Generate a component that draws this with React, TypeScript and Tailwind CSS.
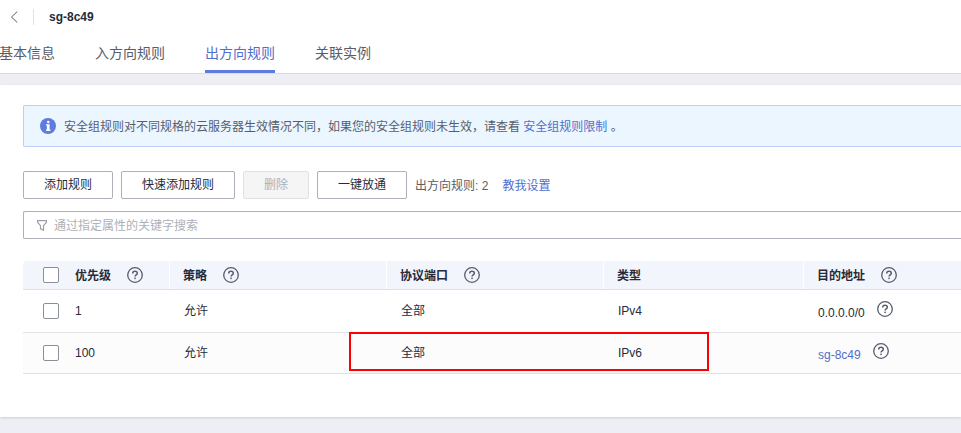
import React, { useState } from 'react';

interface Rule {
  priority: number;
  policy: string;
  port: string;
  type: string;
  target: string;
  targetIsLink?: boolean;
}

const TABS = ['基本信息', '入方向规则', '出方向规则', '关联实例'];

const RULES: Rule[] = [
  { priority: 1, policy: '允许', port: '全部', type: 'IPv4', target: '0.0.0.0/0' },
  { priority: 100, policy: '允许', port: '全部', type: 'IPv6', target: 'sg-8c49', targetIsLink: true },
];

function HelpIcon() {
  return (
    <svg width="16" height="16" viewBox="0 0 16 16" fill="none" className="shrink-0 text-[#575d6c]">
      <circle cx="8" cy="8" r="7.3" stroke="currentColor" strokeWidth="1.3" />
      <path
        d="M5.7 6.4C5.7 5 6.6 4.2 8 4.2s2.3.8 2.3 2c0 1.6-2.2 1.6-2.2 3.3"
        stroke="currentColor"
        strokeWidth="1.5"
      />
      <rect x="7.3" y="10.6" width="1.5" height="1.5" fill="currentColor" />
    </svg>
  );
}

function InfoIcon() {
  return (
    <svg width="16" height="16" viewBox="0 0 16 16" className="shrink-0">
      <circle cx="8" cy="8" r="8" fill="#5e7ce0" />
      <circle cx="8.3" cy="4" r="1.3" fill="#fff" />
      <path d="M6 6.2h3.6v5.3h.8V13H6v-1.5h.9V7.6H6z" fill="#fff" />
    </svg>
  );
}

function FilterIcon() {
  return (
    <svg width="10" height="11" viewBox="0 0 10 11" fill="none" className="shrink-0">
      <path d="M.6.6h8.8v1.6L6.5 5.6v4.6l-3-1.4V5.6L.6 2.2z" stroke="#9b9fa8" strokeWidth="1.2" />
    </svg>
  );
}

function Checkbox({ label }: { label: string }) {
  return (
    <input
      type="checkbox"
      aria-label={label}
      className="size-4 shrink-0 appearance-none rounded-xs border border-[#8a8e99] bg-white checked:bg-[#5e7ce0]"
    />
  );
}

function HeadCell({ title, help, className }: { title: string; help?: boolean; className?: string }) {
  return (
    <th className={`group h-[29px] border-b border-[#dfe1e6] bg-[#f2f5fc] p-0 ${className ?? ''}`}>
      <div className="flex h-7 items-center gap-4 border-r border-white px-[13px] group-last:border-r-0">
        <span className="pt-px">{title}</span>
        {help && <HelpIcon />}
      </div>
    </th>
  );
}

export default function App() {
  const [activeTab, setActiveTab] = useState('出方向规则');
  const buttonClass = 'h-7 rounded-xs border border-[#adb0b8] bg-white px-5 text-[#252b3a]';

  return (
    <div className="min-h-screen overflow-x-hidden bg-[#eeeff4] font-['Liberation_Sans','Noto_Sans_CJK_SC',sans-serif] text-xs text-[#252b3a]">
      <header className="border-b border-[#d9dbe3] bg-white">
        <div className="flex h-[34px] items-center gap-[15px] pl-2.5">
          <button aria-label="返回" className="text-[#575d6c]">
            <svg width="8" height="12" viewBox="0 0 8 12" fill="none">
              <path d="M7.3.5 1.5 6l5.8 5.5" stroke="currentColor" />
            </svg>
          </button>
          <span className="h-4 w-px bg-[#dfe1e6]" />
          <h1 className="font-bold">sg-8c49</h1>
        </div>
        <nav className="-ml-px flex h-[39px] gap-10 text-sm">
          {TABS.map(tab => (
            <button
              key={tab}
              onClick={() => setActiveTab(tab)}
              className={`border-b-3 pt-0.5 whitespace-nowrap ${
                tab === activeTab ? 'border-[#5e7ce0] text-[#526ecc]' : 'border-transparent text-[#575d6c]'
              }`}
            >
              {tab}
            </button>
          ))}
        </nav>
      </header>

      <main className="mt-[11px] bg-white pt-5 pb-[43px] pl-[23px] shadow-sm">
        <div className="flex h-[42px] items-center gap-2 rounded-l-xs border border-r-0 border-[#beccfa] bg-[#ebf6ff] pl-4 text-[#575d6c]">
          <InfoIcon />
          <p className="pt-px">
            安全组规则对不同规格的云服务器生效情况不同，如果您的安全组规则未生效，请查看{' '}
            <a href="#limits" className="text-[#526ecc]">安全组规则限制</a> 。
          </p>
        </div>

        <div className="mt-6 flex items-center gap-2">
          <button className={buttonClass}>添加规则</button>
          <button className={buttonClass}>快速添加规则</button>
          <button disabled className="h-7 rounded-xs border border-[#dfe1e6] bg-[#f5f5f6] px-5 text-[#adb0b8]">
            删除
          </button>
          <button className={buttonClass}>一键放通</button>
          <span className="pt-0.5 text-[#575d6c]">出方向规则: 2</span>
          <a href="#guide" className="ml-1.5 pt-0.5 text-[#526ecc]">教我设置</a>
        </div>

        <label className="mt-3 flex h-7 items-center gap-[7px] rounded-l-xs border border-r-0 border-[#adb0b8] pl-[13px]">
          <FilterIcon />
          <input
            type="text"
            aria-label="搜索"
            placeholder="通过指定属性的关键字搜索"
            className="min-w-0 flex-1 pt-0.5 outline-none placeholder:text-[#adb0b8]"
          />
        </label>

        <div className="relative mt-[22px]">
          <table className="w-full table-fixed border-separate border-spacing-0 text-left">
            <thead>
              <tr>
                <th className="h-[29px] w-[147px] rounded-tl-sm border-b border-[#dfe1e6] bg-[#f2f5fc] p-0">
                  <div className="flex h-7 items-center gap-4 border-r border-white pl-5">
                    <Checkbox label="全选" />
                    <span className="pt-px">优先级</span>
                    <HelpIcon />
                  </div>
                </th>
                <HeadCell title="策略" help className="w-[217px]" />
                <HeadCell title="协议端口" help className="w-[217px]" />
                <HeadCell title="类型" className="w-[200px]" />
                <HeadCell title="目的地址" help />
              </tr>
            </thead>
            <tbody className="[&_td]:border-b [&_td]:border-[#dfe1e6] [&_td]:px-3.5 [&_td]:py-0">
              {RULES.map(rule => (
                <tr key={rule.priority} className="h-[43px] even:h-[41px] even:bg-[#fcfcfc]">
                  <td className="pl-5!">
                    <div className="flex items-center gap-4">
                      <Checkbox label={`选择优先级 ${rule.priority}`} />
                      {rule.priority}
                    </div>
                  </td>
                  <td>{rule.policy}</td>
                  <td>{rule.port}</td>
                  <td>{rule.type}</td>
                  <td>
                    <div className="flex items-start gap-3">
                      {rule.targetIsLink ? (
                        <a href="#group" className="pt-1 text-[#526ecc]">{rule.target}</a>
                      ) : (
                        <span className="pt-1">{rule.target}</span>
                      )}
                      <HelpIcon />
                    </div>
                  </td>
                </tr>
              ))}
            </tbody>
          </table>
          {/* Highlight over the IPv6 rule */}
          <div className="pointer-events-none absolute top-[71px] left-[326px] h-[39px] w-[360px] border-2 border-[#f00]" />
        </div>
      </main>
    </div>
  );
}
